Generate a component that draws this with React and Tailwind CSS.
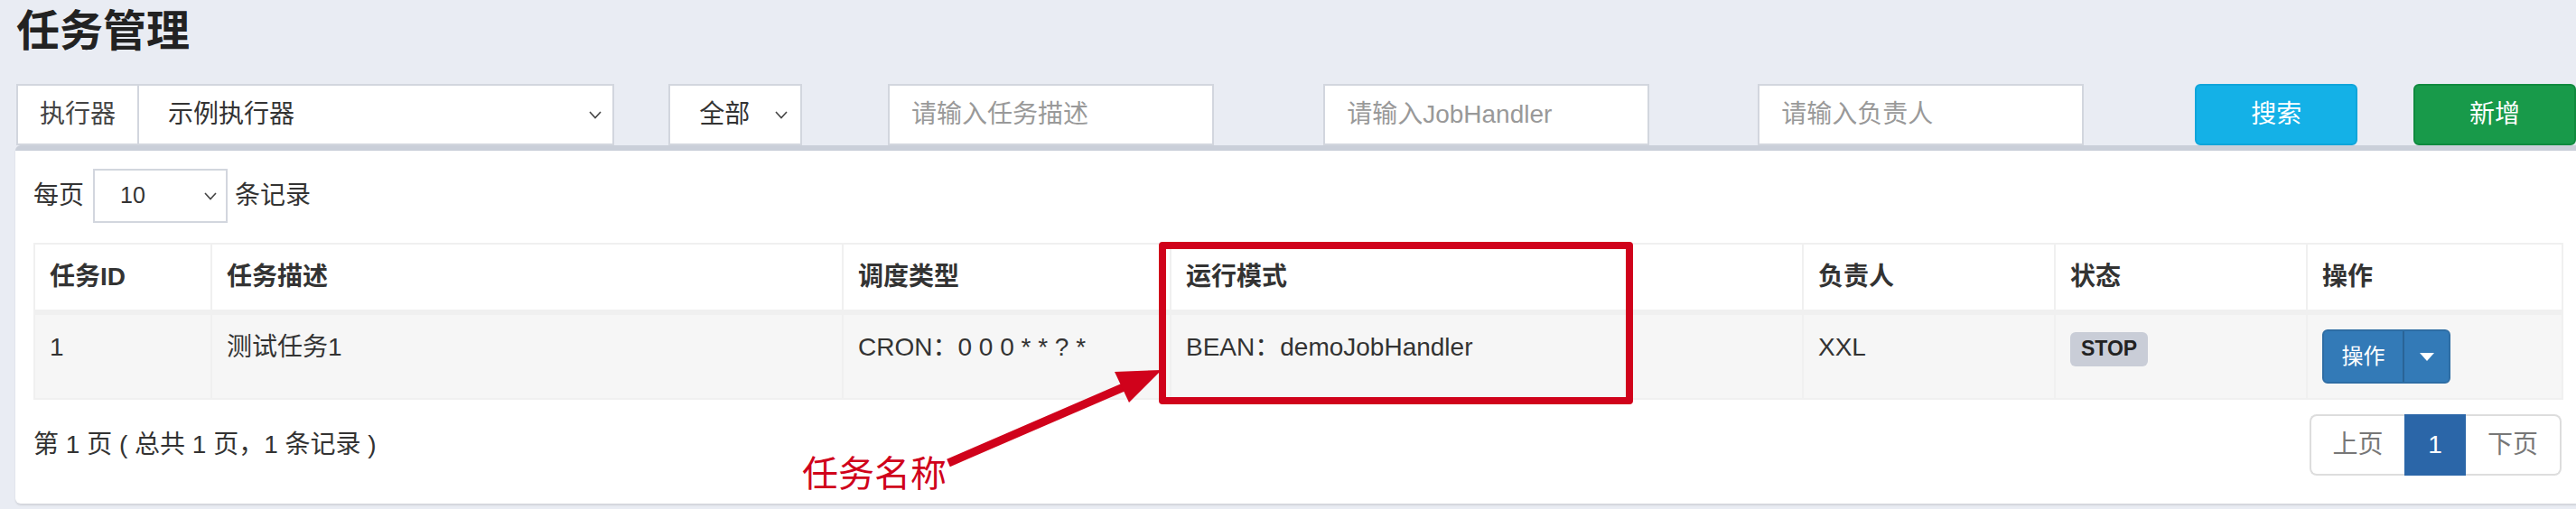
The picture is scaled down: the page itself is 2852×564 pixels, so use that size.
import React from "react";

const Chevron = ({ className = "" }) => (
  <svg className={className} width="14" height="9" viewBox="0 0 14 9" fill="none">
    <path d="M1 1l6 6.5L13 1" stroke="#444" strokeWidth="1.6" />
  </svg>
);

const columns = [
  { title: "任务ID", w: "w-[196px]" },
  { title: "任务描述", w: "w-[699px]" },
  { title: "调度类型", w: "w-[363px]" },
  { title: "运行模式", w: "w-[700px]" },
  { title: "负责人", w: "w-[279px]" },
  { title: "状态", w: "w-[279px]" },
  { title: "操作", w: "w-[283px]" },
];

const TextInput = ({ placeholder, className = "" }) => (
  <div
    className={`flex h-full w-[362px] items-center border-2 border-[#d2d6de] bg-white px-[24px] text-[28px] text-[#999] ${className}`}
  >
    {placeholder}
  </div>
);

const App = () => {
  return (
    <div className="relative h-[564px] w-[2852px] overflow-hidden bg-[#e9ecf3] font-['Helvetica_Neue','Liberation_Sans','Noto_Sans_CJK_SC',sans-serif] text-[#333]">
      <div className="pl-[18px]">
        {/* header */}
        <div className="h-[93px] pt-[9px]">
          <h1 className="text-[48px] font-semibold leading-[52px] text-[#222]">任务管理</h1>
        </div>

        {/* filters */}
        <div className="flex h-[68px]">
          <div className="flex w-[664px]">
            <span className="flex items-center border-2 border-[#d2d6de] bg-white px-[24px] text-[28px] text-[#444]">
              执行器
            </span>
            <div className="flex flex-1 items-center justify-between border-2 border-l-0 border-[#d2d6de] bg-white pl-[32px] pr-[12px] text-[28px] text-[#333]">
              示例执行器
              <Chevron />
            </div>
          </div>
          <div className="ml-[60px] flex w-[148px] items-center justify-between border-2 border-[#d2d6de] bg-white pl-[32px] pr-[14px] text-[28px] text-[#333]">
            全部
            <Chevron />
          </div>
          <TextInput placeholder="请输入任务描述" className="ml-[95px]" />
          <TextInput placeholder="请输入JobHandler" className="ml-[121px]" />
          <TextInput placeholder="请输入负责人" className="ml-[120px]" />
          <button className="ml-[123px] h-full w-[180px] rounded-[6px] border-2 border-[#0fa5da] bg-[#14b1e7] text-[28px] text-white">
            搜索
          </button>
          <button className="ml-[62px] h-full w-[180px] shrink-0 rounded-[6px] border-2 border-[#0f8a3e] bg-[#189a4a] text-[28px] text-white">
            新增
          </button>
        </div>

        {/* box */}
        <div className="-ml-px w-[2840px] rounded-[6px] border-t-[6px] border-[#cacfd9] bg-white px-[20px] pt-[20px] pb-[31px] shadow-[0_2px_2px_rgba(0,0,0,0.1)]">
          <div className="flex h-[60px] items-center text-[28px]">
            <span>每页</span>
            <div className="ml-[10px] flex h-full w-[149px] items-center justify-between border-2 border-[#d2d6de] pl-[28px] pr-[10px] text-[25px]">
              10
              <Chevron />
            </div>
            <span className="ml-[8px]">条记录</span>
          </div>

          <table className="mt-[22px] w-[2799px] table-fixed border-collapse border-2 border-[#f0f0f0] text-left text-[28px]">
            <thead>
              <tr>
                {columns.map((c) => (
                  <th
                    key={c.title}
                    className={`${c.w} border-2 border-b-[6px] border-[#f0f0f0] px-[16px] py-[16px] font-bold leading-[40px] text-[#333]`}
                  >
                    {c.title}
                  </th>
                ))}
              </tr>
            </thead>
            <tbody>
              <tr className="bg-[#f6f6f6] align-top leading-[40px]">
                <td className="border-2 border-[#f0f0f0] px-[16px] py-[16px]">1</td>
                <td className="border-2 border-[#f0f0f0] px-[16px] py-[16px]">测试任务1</td>
                <td className="border-2 border-[#f0f0f0] px-[16px] py-[16px]">CRON：0 0 0 * * ? *</td>
                <td className="border-2 border-[#f0f0f0] px-[16px] py-[16px]">BEAN：demoJobHandler</td>
                <td className="border-2 border-[#f0f0f0] px-[16px] py-[16px]">XXL</td>
                <td className="border-2 border-[#f0f0f0] px-[16px] py-[16px]">
                  <span className="mt-[2px] inline-flex h-[38px] items-center rounded-[6px] bg-[#c9cdd7] px-[12px] text-[23px] font-bold leading-none text-[#222]">
                    STOP
                  </span>
                </td>
                <td className="border-2 border-[#f0f0f0] px-[16px] py-[16px]">
                  <div className="flex h-[60px] w-[142px] overflow-hidden rounded-[6px] border-2 border-[#2e6da4] bg-[#337ab7] text-[24px] text-white">
                    <span className="flex w-[89px] items-center justify-center border-r-2 border-[#2a6496]">
                      操作
                    </span>
                    <span className="flex flex-1 items-center justify-center">
                      <svg width="16" height="9" viewBox="0 0 16 9">
                        <path d="M0 0h16L8 9z" fill="#fff" />
                      </svg>
                    </span>
                  </div>
                </td>
              </tr>
            </tbody>
          </table>

          <div className="mt-[16px] flex w-[2799px] items-center justify-between">
            <span className="text-[28px]">第 1 页 ( 总共 1 页，1 条记录 )</span>
            <div className="flex h-[68px] text-[28px]">
              <span className="flex w-[105px] items-center justify-center rounded-l-[8px] border-2 border-r-0 border-[#dddddd] text-[#777]">
                上页
              </span>
              <span className="flex w-[68px] items-center justify-center bg-[#2b66a8] text-white">1</span>
              <span className="flex w-[106px] items-center justify-center rounded-r-[8px] border-2 border-l-0 border-[#dddddd] text-[#777]">
                下页
              </span>
            </div>
          </div>
        </div>
      </div>

      {/* annotation */}
      <div className="absolute left-[1283px] top-[268px] h-[180px] w-[525px] rounded-[4px] border-[8px] border-[#d0021b]" />
      <svg className="pointer-events-none absolute left-0 top-0" width="2852" height="564">
        <line x1="1050" y1="513" x2="1244" y2="429" stroke="#d0021b" strokeWidth="9" />
        <polygon points="1286,410 1234,412 1250,446" fill="#d0021b" />
      </svg>
      <span className="absolute left-[888px] top-[505px] text-[40px] leading-[40px] text-[#d0021b]">任务名称</span>
    </div>
  );
};

export default App;
